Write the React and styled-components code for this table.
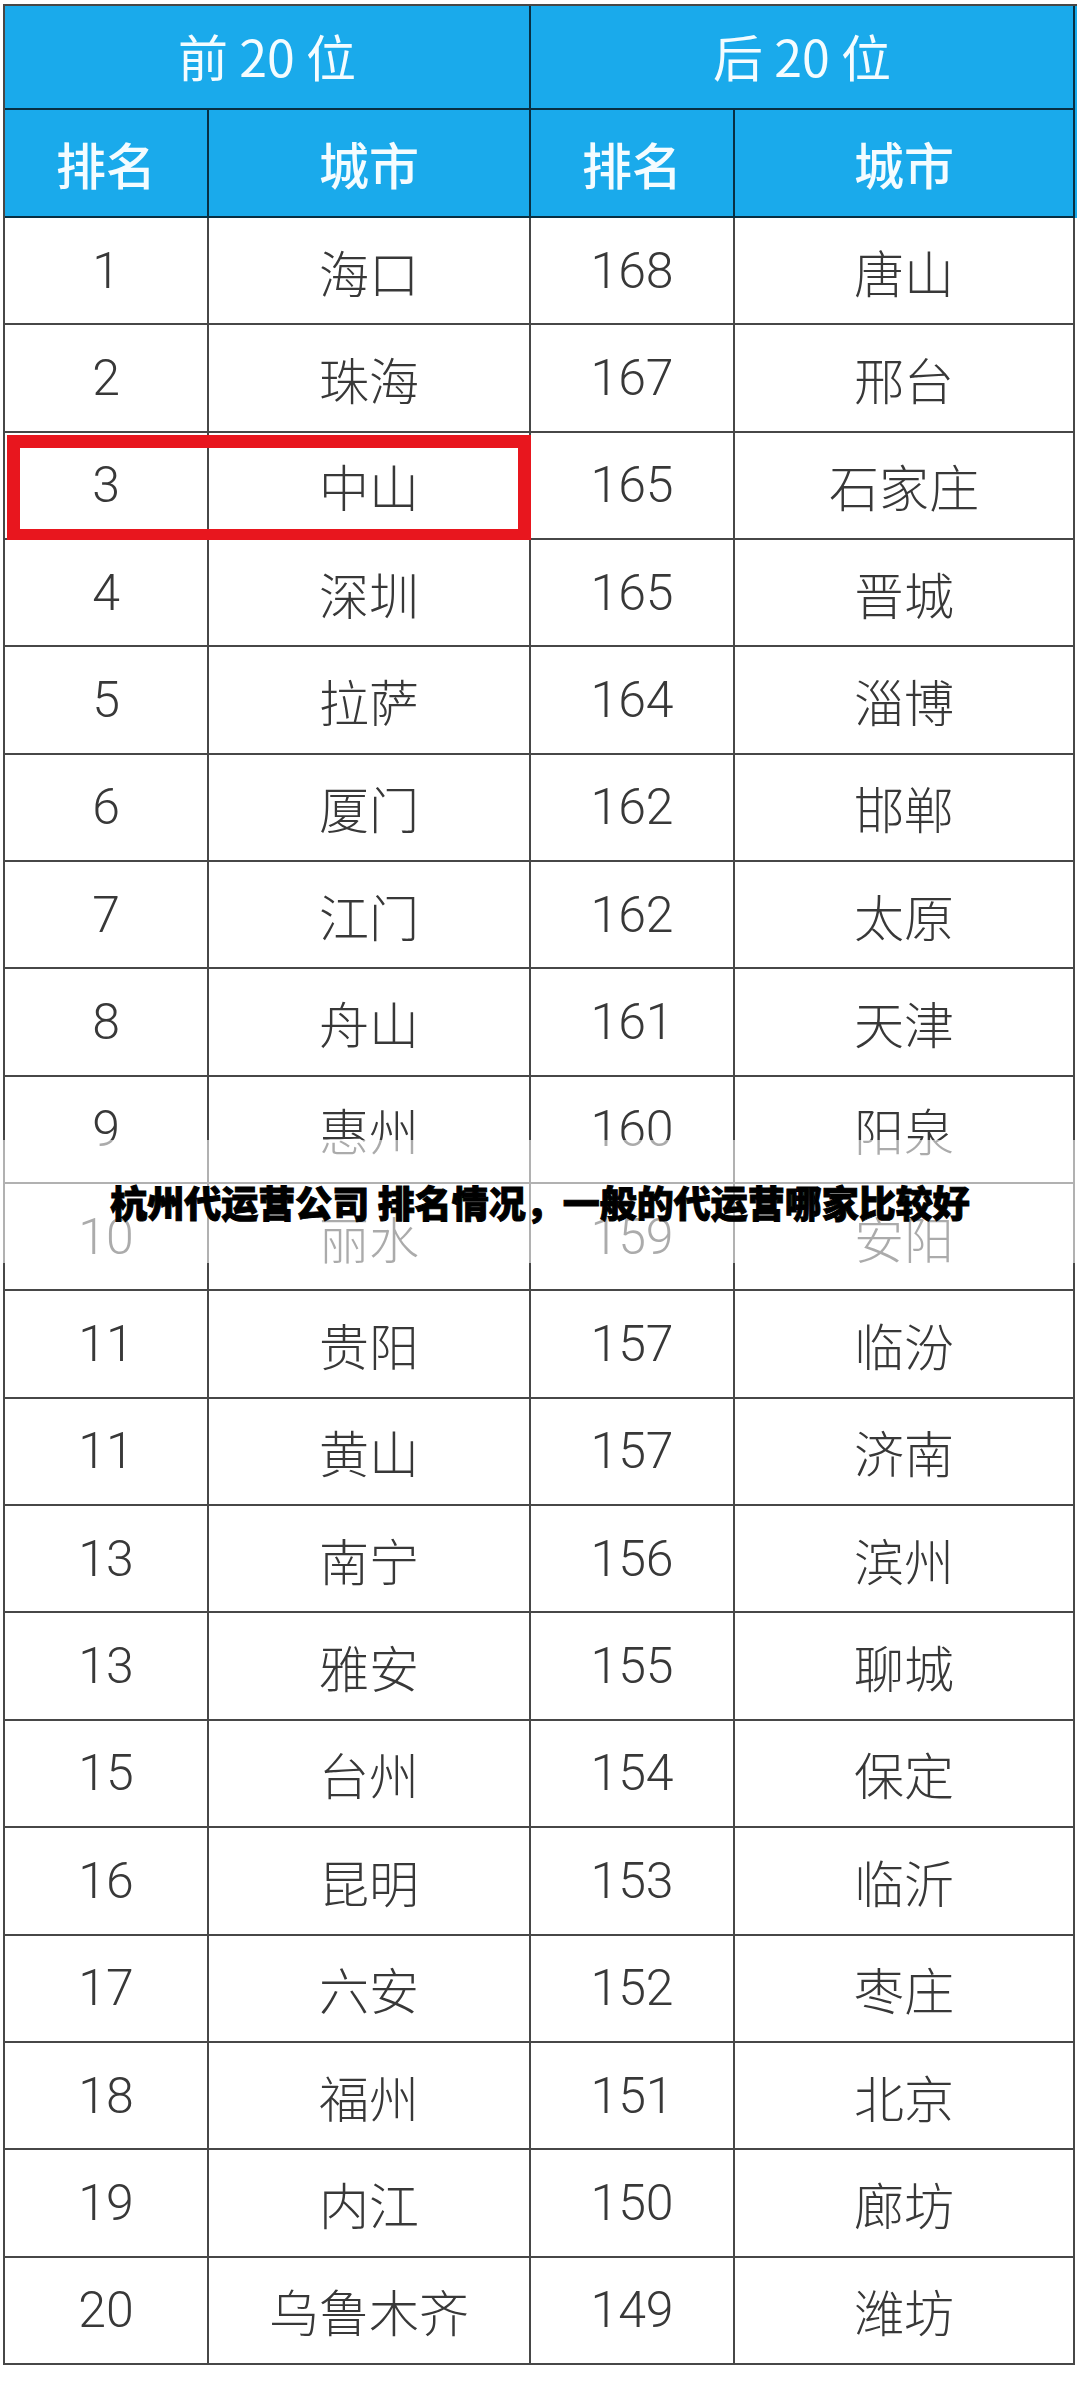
import styled, { createGlobalStyle } from 'styled-components';

const rows = [
	['1', '海口', '168', '唐山'],
	['2', '珠海', '167', '邢台'],
	['3', '中山', '165', '石家庄'],
	['4', '深圳', '165', '晋城'],
	['5', '拉萨', '164', '淄博'],
	['6', '厦门', '162', '邯郸'],
	['7', '江门', '162', '太原'],
	['8', '舟山', '161', '天津'],
	['9', '惠州', '160', '阳泉'],
	['10', '丽水', '159', '安阳'],
	['11', '贵阳', '157', '临汾'],
	['11', '黄山', '157', '济南'],
	['13', '南宁', '156', '滨州'],
	['13', '雅安', '155', '聊城'],
	['15', '台州', '154', '保定'],
	['16', '昆明', '153', '临沂'],
	['17', '六安', '152', '枣庄'],
	['18', '福州', '151', '北京'],
	['19', '内江', '150', '廊坊'],
	['20', '乌鲁木齐', '149', '潍坊'],
];

const App = () => {
	return (
		<>
			<GlobalStyle />
			<Page>
				<Table>
					<HeaderRow>
						<GroupCell>前 20 位</GroupCell>
						<GroupCell>后 20 位</GroupCell>
					</HeaderRow>
					<Row $head>
						<HeadCell>排名</HeadCell>
						<HeadCell>城市</HeadCell>
						<HeadCell>排名</HeadCell>
						<HeadCell>城市</HeadCell>
					</Row>
					{rows.map((r, i) => (
						<Row key={i}>
							{r.map((v, j) => (
								<Cell key={j}>{v}</Cell>
							))}
							{i === 2 && <Highlight />}
						</Row>
					))}
				</Table>
				<Banner>
					<span>杭州代运营公司 排名情况，一般的代运营哪家比较好</span>
				</Banner>
			</Page>
		</>
	);
};

export default App;

const GlobalStyle = createGlobalStyle`
	html, body {
		margin: 0;
		padding: 0;
		background: #fff;
	}
	* {
		box-sizing: border-box;
	}
`;

const Page = styled.div`
	position: relative;
	width: 1080px;
	height: 2406px;
	padding: 4px 0 0 3px;
	background: #fff;
	font-family: Roboto, 'Noto Sans CJK SC', sans-serif;
`;

const Table = styled.div`
	width: 1074px;
	border-top: 2px solid rgba(0, 0, 0, 0.72);
	border-left: 2px solid rgba(0, 0, 0, 0.72);
`;

const HeaderRow = styled.div`
	display: grid;
	grid-template-columns: 526px 544px;
	height: 104px;
	background: #1aaaeb;
`;

const GroupCell = styled.div`
	display: flex;
	align-items: center;
	justify-content: center;
	border-right: 2px solid rgba(0, 0, 0, 0.72);
	border-bottom: 2px solid rgba(0, 0, 0, 0.72);
	color: #f4fcff;
	font-family: 'Noto Sans CJK SC', sans-serif;
	font-size: 50px;
	font-weight: 400;
	padding-bottom: 4px;
`;

const Row = styled.div`
	position: relative;
	display: grid;
	grid-template-columns: 204px 322px 204px 340px;
	height: ${(p) => (p.$head ? '108px' : '107.35px')};
	background: ${(p) => (p.$head ? '#1aaaeb' : '#fff')};
`;

const Cell = styled.div`
	display: flex;
	align-items: center;
	justify-content: center;
	border-right: 2px solid rgba(0, 0, 0, 0.72);
	border-bottom: 2px solid rgba(0, 0, 0, 0.72);
	color: #383838;
	font-size: 50px;
	font-weight: 300;
`;

const HeadCell = styled(Cell)`
	color: #f4fcff;
	font-family: 'Noto Sans CJK SC', sans-serif;
	font-weight: 500;
	font-size: 50px;
`;

const Highlight = styled.div`
	position: absolute;
	top: 2px;
	left: 2px;
	width: 524px;
	height: 107px;
	border: 13px solid #e8161e;
	pointer-events: none;
`;

const Banner = styled.div`
	position: absolute;
	left: 0;
	right: 0;
	top: 1140px;
	height: 123px;
	display: flex;
	align-items: center;
	justify-content: center;
	background: rgba(255, 255, 255, 0.58);

	span {
		color: #000;
		font-family: 'Noto Sans CJK SC', sans-serif;
		font-size: 37px;
		font-weight: 900;
		white-space: pre;
		-webkit-text-stroke: 1px #000;
	}
`;
